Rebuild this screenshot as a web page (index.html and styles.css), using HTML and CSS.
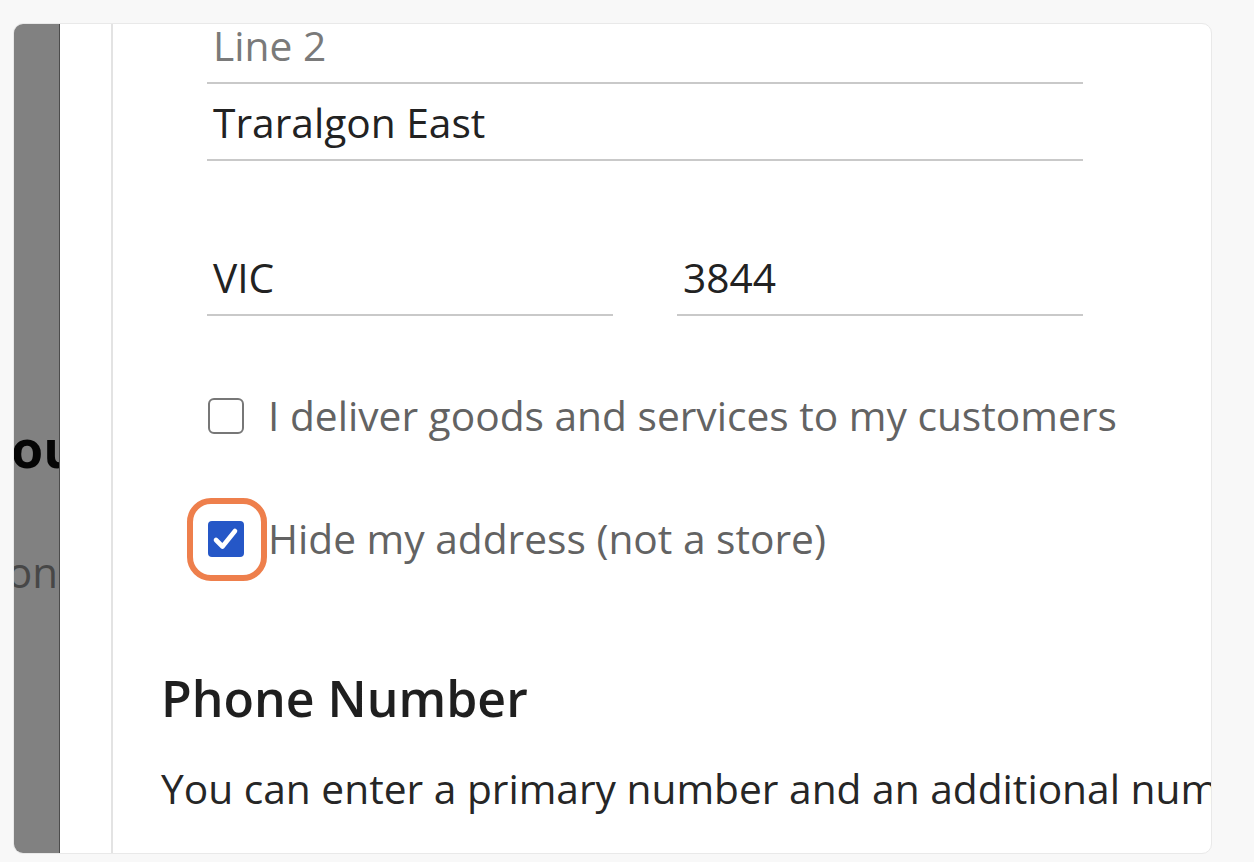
FILE: index.html
```html
<!DOCTYPE html>
<html lang="en">
<head>
<meta charset="utf-8">
<title>Address settings</title>
<link rel="stylesheet" href="styles.css">
</head>
<body>
<div class="card">
  <div class="strip">
    <div class="strip-heading">ou</div>
    <div class="strip-text">one</div>
  </div>
  <div class="gutter"></div>
  <div class="content">
    <div class="form">
      <div class="field placeholder">Line 2</div>
      <div class="field field-2">Traralgon East</div>
      <div class="row">
        <div class="field">VIC</div>
        <div class="field">3844</div>
      </div>
      <label class="check check-1">
        <span class="box"></span>
        <span class="check-label">I deliver goods and services to my customers</span>
      </label>
      <label class="check check-2">
        <span class="box box-on">
          <svg class="tick" viewBox="0 0 36 36" width="36" height="36"><path d="M8 19 L14.5 25.5 L27 10" fill="none" stroke="#fff" stroke-width="4.6" stroke-linecap="round" stroke-linejoin="round"/></svg>
          <span class="ring"></span>
        </span>
        <span class="check-label">Hide my address (not a store)</span>
      </label>
    </div>
    <h2 class="heading">Phone Number</h2>
    <p class="para">You can enter a primary number and an additional number for your customers to contact you.</p>
  </div>
</div>
</body>
</html>
```
FILE: styles.css
```css
html, body {
  margin: 0;
  padding: 0;
}
body {
  background: #f8f8f8;
  font-family: "Open Sans", "Noto Sans", sans-serif;
  padding: 23px 42px 0 13px;
  height: 862px;
  box-sizing: border-box;
  overflow: hidden;
}
.card {
  display: flex;
  height: 831px;
  box-sizing: border-box;
  border: 1px solid #e9e9e9;
  border-radius: 10px;
  background: #fff;
  overflow: hidden;
}
.strip {
  flex: 0 0 45px;
  background: #818181;
  border-right: 1px solid #4c4c4c;
  display: flex;
  flex-direction: column;
  overflow: hidden;
  white-space: nowrap;
}
.strip-heading {
  margin-top: 389px;
  margin-left: -3px;
  font-size: 52px;
  font-weight: 700;
  line-height: 70px;
  color: #050505;
}
.strip-text {
  margin-top: 60px;
  margin-left: -7px;
  font-size: 42px;
  line-height: 57px;
  color: #474747;
}
.gutter {
  flex: 0 0 51px;
  border-right: 2px solid #e3e3e3;
}
.content {
  flex: 1 1 auto;
  min-width: 0;
  padding-left: 48px;
}
.form {
  margin-left: 46px;
  width: 876px;
  margin-top: -6.5px;
}
.field {
  font-size: 40.7px;
  line-height: 54px;
  color: #222;
  padding: 0 0 10px 6px;
  border-bottom: 2px solid #c9c9c9;
}
.placeholder {
  color: #7a7a7a;
}
.field-2 {
  margin-top: 11px;
}
.row {
  display: grid;
  grid-template-columns: 1fr 1fr;
  column-gap: 64px;
  margin-top: 89px;
}
.check {
  display: flex;
  align-items: center;
  gap: 24px;
  font-size: 40.7px;
  line-height: 54px;
  color: #636363;
  white-space: nowrap;
}
.check-1 {
  margin-top: 72px;
}
.check-2 {
  margin-top: 69px;
}
.box {
  position: relative;
  flex: 0 0 36px;
  width: 36px;
  height: 36px;
  box-sizing: border-box;
  margin-left: 1px;
  margin-top: 3px;
  border: 2px solid #777;
  border-radius: 6px;
  background: #fff;
}
.box-on {
  border: none;
  border-radius: 4px;
  background: #2557c7;
}
.tick {
  display: block;
}
.ring {
  position: absolute;
  left: -21px;
  top: -23px;
  width: 80px;
  height: 83px;
  box-sizing: border-box;
  border: 6px solid #ee7f4c;
  border-radius: 24px;
  filter: blur(0.4px);
}
.heading {
  margin: 99px 0 0;
  font-size: 50px;
  line-height: 68px;
  font-weight: 600;
  color: #1f1f1f;
}
.para {
  margin: 29px 0 0;
  font-size: 40.7px;
  line-height: 54px;
  color: #262626;
  white-space: nowrap;
}
```
